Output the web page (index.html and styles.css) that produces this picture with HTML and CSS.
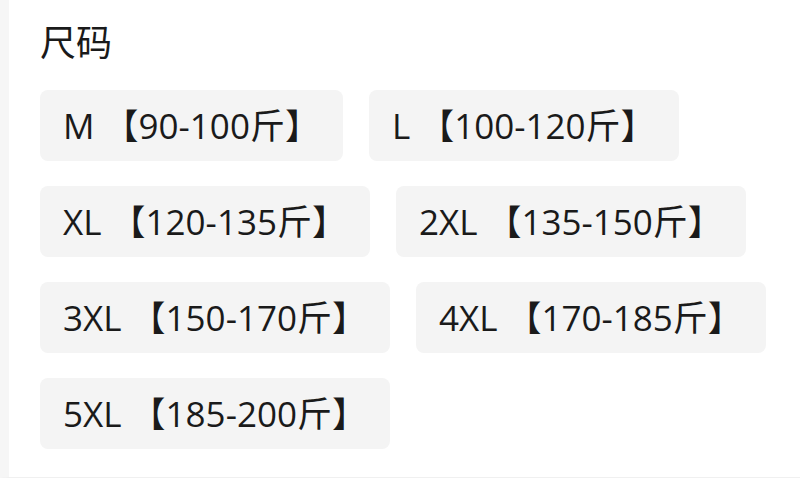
FILE: index.html
```html
<!DOCTYPE html>
<html lang="zh-CN">
<head>
<meta charset="UTF-8">
<meta name="viewport" content="width=device-width, initial-scale=1.0">
<title>尺码</title>
<link rel="stylesheet" href="styles.css">
</head>
<body>
<div class="size-panel">
    <div class="size-title">尺码</div>

    <!-- 尺码选项 -->
    <div class="size-list">
        <div class="size-chip">M 【90-100斤】</div>
        <div class="size-chip">L 【100-120斤】</div>
        <div class="size-chip">XL 【120-135斤】</div>
        <div class="size-chip">2XL 【135-150斤】</div>
        <div class="size-chip">3XL 【150-170斤】</div>
        <div class="size-chip">4XL 【170-185斤】</div>
        <div class="size-chip">5XL 【185-200斤】</div>
    </div>
</div>
</body>
</html>
```

FILE: styles.css
```css
body {
    margin: 0;
    background: #fff;
    font-family: "Open Sans", "Noto Sans CJK SC", sans-serif;
    color: #1a1a1a;
}

.size-panel {
    height: 478px;
    padding: 24px 20px 0 31px;
    border-left: 9px solid #f6f6f6;
    border-bottom: 1px solid #f0f0f0;
    box-sizing: border-box;
}

.size-title {
    font-size: 36px;
    line-height: 38px;
    margin-bottom: 28px;
}

.size-list {
    display: flex;
    flex-wrap: wrap;
    gap: 25px 26px;
}

.size-chip {
    height: 71px;
    line-height: 71px;
    padding: 0 23px;
    background: #f4f4f4;
    border-radius: 8px;
    font-size: 35px;
    white-space: nowrap;
}
```
